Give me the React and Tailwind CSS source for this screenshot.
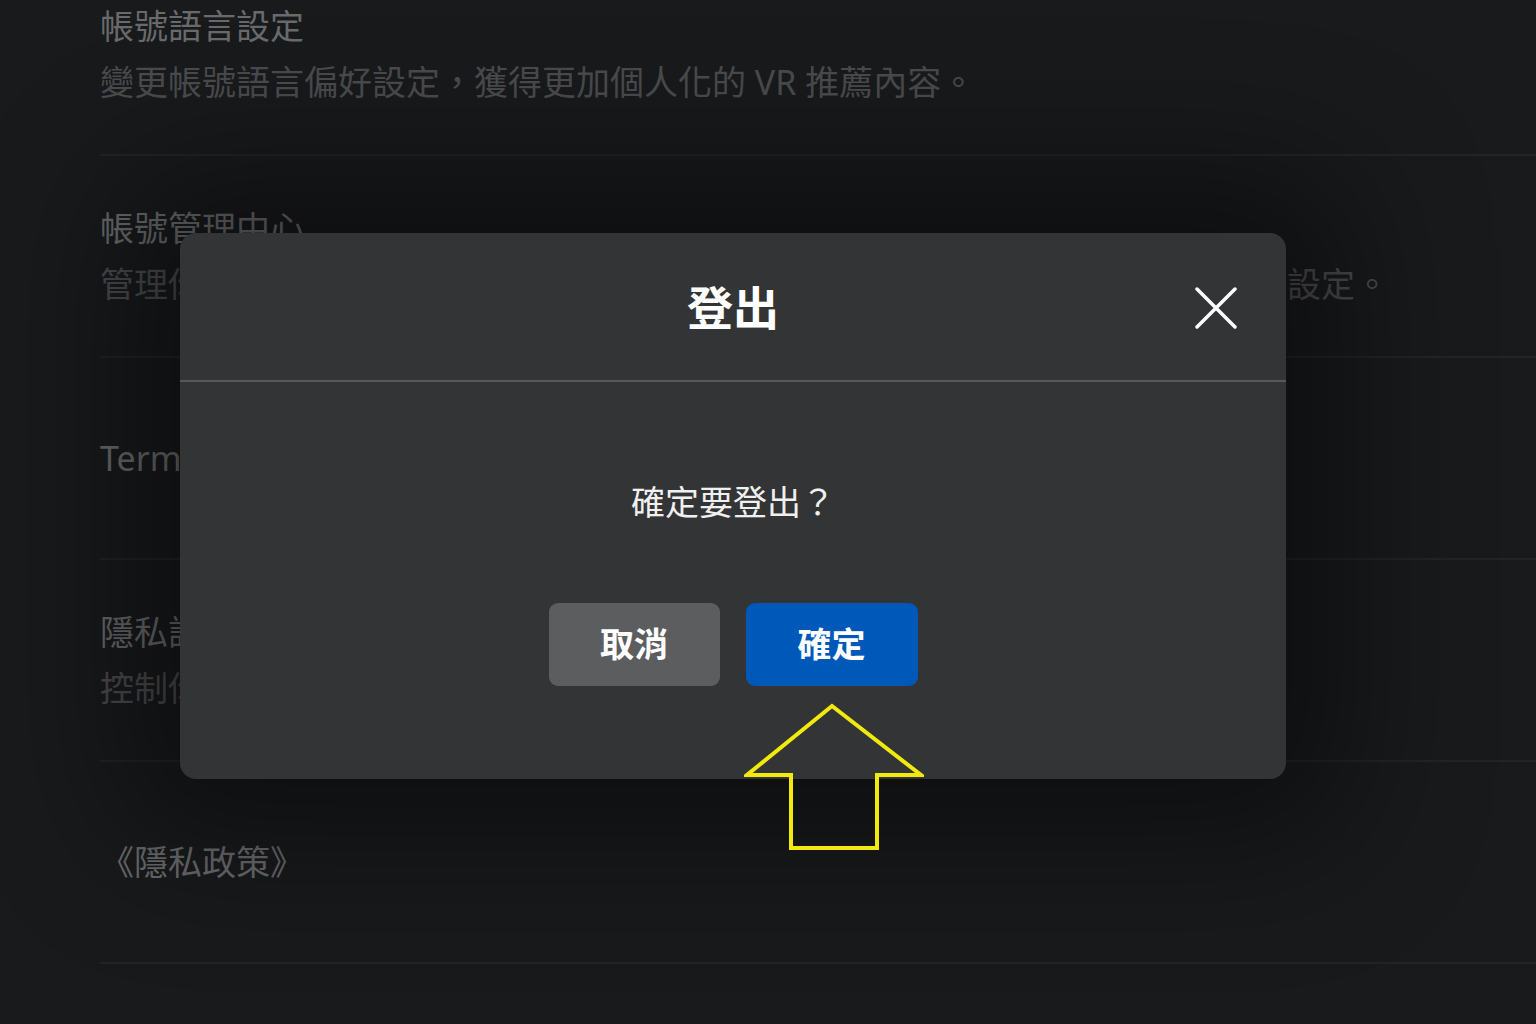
import React from "react";

const FONT = { fontFamily: '"Noto Sans", "Noto Sans CJK TC", sans-serif' };

const settings = [
  { title: "帳號語言設定", desc: "變更帳號語言偏好設定，獲得更加個人化的 VR 推薦內容。" },
  { title: "帳號管理中心", desc: "管理你在 Meta 技術產品中的連結體驗、個人檔案資訊，以及帳號密碼與安全性設定。" },
  { title: "Terms of Service" },
  { title: "隱私設定", desc: "控制你的個人資料分享方式和其他人可以看到的內容。" },
  { title: "《隱私政策》" },
];

// One row of the settings list behind the dialog
function SettingRow({ title, desc }) {
  return (
    <div className="h-[202px] border-b-2 border-[#2a2b2e] flex flex-col justify-center gap-[20px]">
      <div className="text-[34px] leading-[36px] text-[#7c7d7f]">{title}</div>
      {desc && <div className="text-[34px] leading-[36px] text-[#58595b] whitespace-nowrap">{desc}</div>}
    </div>
  );
}

function CloseIcon() {
  return (
    <svg width="42" height="42" viewBox="0 0 42 42" fill="none">
      <path d="M2 2 L40 40 M40 2 L2 40" stroke="white" strokeWidth="3.5" strokeLinecap="round" />
    </svg>
  );
}

function PointerArrow() {
  return (
    <svg
      className="absolute left-[564px] top-[470px]"
      width="180"
      height="150"
      viewBox="0 0 180 150"
      fill="none"
    >
      <path
        d="M88 3 L3 72 L47 72 L47 145 L133 145 L133 72 L177 72 Z"
        stroke="#f2ea0c"
        strokeWidth="4"
        strokeLinejoin="miter"
      />
    </svg>
  );
}

export default function App() {
  return (
    <div className="relative w-[1536px] h-[1024px] overflow-hidden bg-[#1e1f22]" style={FONT}>
      <div className="pl-[100px] -mt-[46px]">
        {settings.map((s) => (
          <SettingRow key={s.title} {...s} />
        ))}
      </div>

      {/* dim layer */}
      <div className="absolute inset-0 bg-black/15" />

      <div className="absolute inset-0 flex items-start pl-[180px] pt-[233px]">
        <div className="relative w-[1106px] h-[546px] rounded-[16px] bg-[#333436] shadow-[0_0_140px_60px_rgba(0,0,0,0.45)] flex flex-col">
          <div className="relative h-[149px] flex items-center justify-center border-b-2 border-[#57585a]">
            <h2 className="text-[46px] font-bold text-white leading-none">登出</h2>
            <button className="absolute right-[49px] top-[54px]">
              <CloseIcon />
            </button>
          </div>
          <div className="flex-1 flex flex-col items-center pt-[100px]">
            <p className="text-[34px] leading-[40px] text-[#f0f0f0]">確定要登出？</p>
            <div className="mt-[81px] flex gap-[26px]">
              <button className="w-[171px] h-[83px] rounded-[9px] bg-[#5c5d5f] text-white text-[34px] font-bold">
                取消
              </button>
              <button className="w-[172px] h-[83px] rounded-[9px] bg-[#0059b9] text-white text-[34px] font-bold">
                確定
              </button>
            </div>
          </div>
          <PointerArrow />
        </div>
      </div>
    </div>
  );
}
